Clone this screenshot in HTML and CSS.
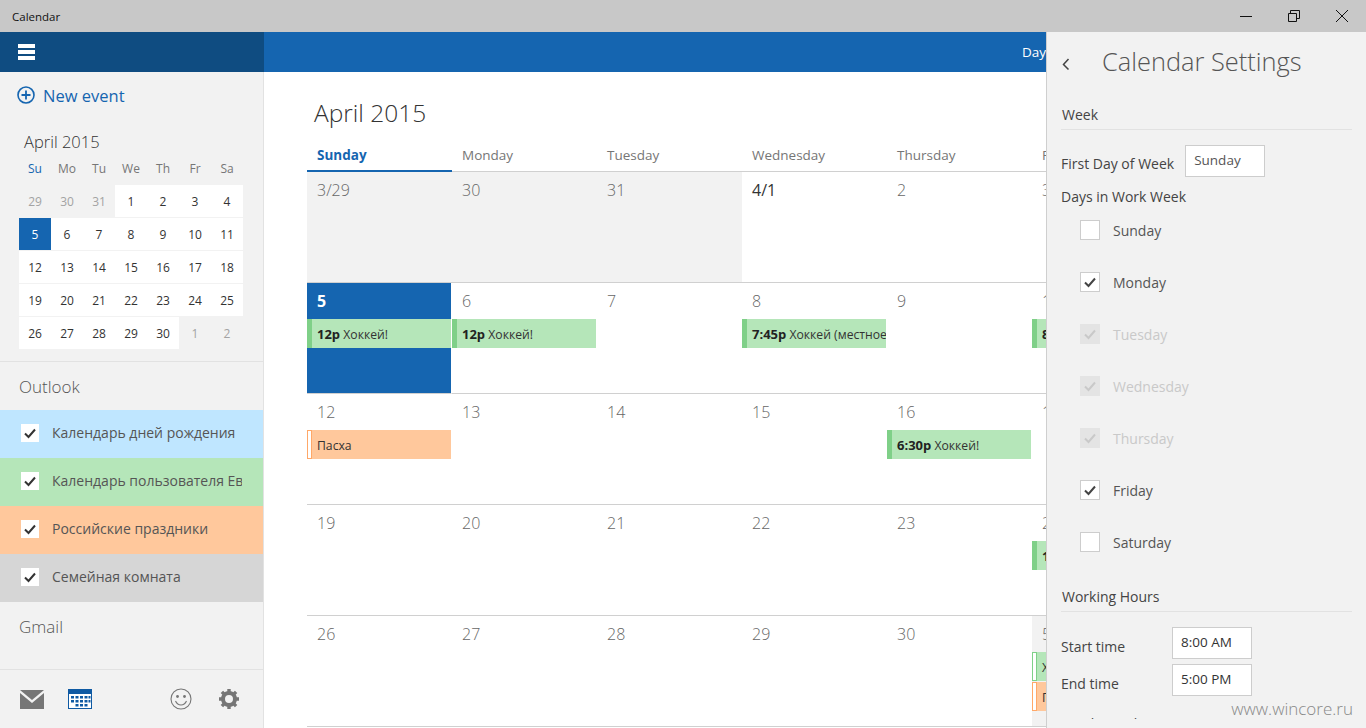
FILE: index.html
```html
<!DOCTYPE html>
<html lang="en">
<head>
<meta charset="utf-8">
<title>Calendar</title>
<link rel="stylesheet" href="styles.css">
</head>
<body>
<div class="window">
  <header class="titlebar">
    <span class="app-name">Calendar</span>
    <div class="win-controls">
      <svg class="win-btn" viewBox="0 0 48 32" width="48" height="32"><path d="M18 16.5h12" stroke="#111" fill="none"/></svg>
      <svg class="win-btn" viewBox="0 0 48 32" width="48" height="32"><path d="M18.500 13.500h8v8h-8zM20.500 13.500v-3h9v8h-3" stroke="#111" fill="none"/></svg>
      <svg class="win-btn" viewBox="0 0 48 32" width="48" height="32"><path d="M18 10l12 12M30 10L18 22" stroke="#111" fill="none"/></svg>
    </div>
  </header>
  <div class="app">
    <aside class="sidebar">
      <div class="side-head">
        <div class="burger"><i></i><i></i><i></i></div>
      </div>
      <div class="new-event">
        <svg viewBox="0 0 18 18" width="18" height="18"><circle cx="9" cy="9" r="8" fill="none" stroke="#1565b0" stroke-width="1.6"/><path d="M9 4.500v9M4.500 9h9" stroke="#1565b0" stroke-width="1.8" fill="none"/></svg>
        <span>New event</span>
      </div>
      <div class="mini">
        <div class="mini-title">April 2015</div>
        <div class="mini-grid">
          <div class="dow cur">Su</div><div class="dow">Mo</div><div class="dow">Tu</div><div class="dow">We</div><div class="dow">Th</div><div class="dow">Fr</div><div class="dow">Sa</div>
          <div class="d off">29</div><div class="d off">30</div><div class="d off">31</div><div class="d">1</div><div class="d">2</div><div class="d">3</div><div class="d">4</div>
          <div class="d sel">5</div><div class="d">6</div><div class="d">7</div><div class="d">8</div><div class="d">9</div><div class="d">10</div><div class="d">11</div>
          <div class="d">12</div><div class="d">13</div><div class="d">14</div><div class="d">15</div><div class="d">16</div><div class="d">17</div><div class="d">18</div>
          <div class="d">19</div><div class="d">20</div><div class="d">21</div><div class="d">22</div><div class="d">23</div><div class="d">24</div><div class="d">25</div>
          <div class="d">26</div><div class="d">27</div><div class="d">28</div><div class="d">29</div><div class="d">30</div><div class="d off">1</div><div class="d off">2</div>
        </div>
      </div>
      <div class="accounts">
        <div class="acc-name">Outlook</div>
        <div class="cal-row blue"><span class="cal-check"><svg viewBox="0 0 18 18" width="18" height="18"><path d="M4 9.500l3.500 3.500L14 5.500" fill="none" stroke="#333" stroke-width="2"/></svg></span><span class="cal-label">Календарь дней рождения</span></div>
        <div class="cal-row green"><span class="cal-check"><svg viewBox="0 0 18 18" width="18" height="18"><path d="M4 9.500l3.500 3.500L14 5.500" fill="none" stroke="#333" stroke-width="2"/></svg></span><span class="cal-label">Календарь пользователя Ев</span></div>
        <div class="cal-row orange"><span class="cal-check"><svg viewBox="0 0 18 18" width="18" height="18"><path d="M4 9.500l3.500 3.500L14 5.500" fill="none" stroke="#333" stroke-width="2"/></svg></span><span class="cal-label">Российские праздники</span></div>
        <div class="cal-row grey"><span class="cal-check"><svg viewBox="0 0 18 18" width="18" height="18"><path d="M4 9.500l3.500 3.500L14 5.500" fill="none" stroke="#333" stroke-width="2"/></svg></span><span class="cal-label">Семейная комната</span></div>
        <div class="acc-name gmail">Gmail</div>
      </div>
      <div class="side-foot">
        <svg viewBox="0 0 24 19" width="24" height="19"><path d="M0 0l12 10L24 0z" fill="#767676"/><path d="M0 3l12 10L24 3v16H0z" fill="#767676"/></svg>
        <svg class="cal-icon" viewBox="0 0 24 20" width="24" height="20"><path d="M0 0h24v20H0z" fill="#0f5aa3"/><path d="M1 5h22v14H1z" fill="#fff"/><path d="M3 7h3v2.500H3zM7.500 7h3v2.500h-3zM12 7h3v2.500h-3zM16.500 7h3v2.500h-3zM3 11h3v2.500H3zM7.500 11h3v2.500h-3zM12 11h3v2.500h-3zM16.500 11h3v2.500h-3zM20.500 7h2v2.500h-2zM20.500 11h2v2.500h-2zM7.500 15h3v2.500h-3zM12 15h3v2.500h-3zM16.500 15h3v2.500h-3z" fill="#0f5aa3"/></svg>
        <svg class="smile" viewBox="0 0 22 22" width="22" height="22"><circle cx="11" cy="11" r="10" fill="none" stroke="#767676" stroke-width="1.100"/><circle cx="7.500" cy="8.500" r="1.400" fill="#767676"/><circle cx="14.500" cy="8.500" r="1.400" fill="#767676"/><path d="M5.500 13c1.300 2.800 3.300 4 5.500 4s4.200-1.200 5.500-4" fill="none" stroke="#767676" stroke-width="1.100"/></svg>
        <svg viewBox="0 0 22 22" width="22" height="22"><circle cx="11" cy="11" r="6" fill="none" stroke="#767676" stroke-width="4"/><path d="M11 1v20M1 11h20M3.900 3.900l14.200 14.200M18.100 3.900L3.900 18.100" stroke="#767676" stroke-width="3.400" stroke-dasharray="3.400 13.600 3.400" fill="none"/></svg>
      </div>
    </aside>
    <main class="main">
      <div class="top-bar"><span>Day</span></div>
      <h1 class="month">April 2015</h1>
      <div class="weekdays">
        <div class="wd active">Sunday</div><div class="wd">Monday</div><div class="wd">Tuesday</div><div class="wd">Wednesday</div><div class="wd">Thursday</div><div class="wd">Friday</div>
      </div>
      <div class="month-grid">
        <div class="cell past"><div class="num">3/29</div></div>
        <div class="cell past"><div class="num">30</div></div>
        <div class="cell past"><div class="num">31</div></div>
        <div class="cell"><div class="num strong">4/1</div></div>
        <div class="cell"><div class="num">2</div></div>
        <div class="cell"><div class="num">3</div></div>

        <div class="cell today"><div class="num">5</div><div class="ev green"><b>12p</b> Хоккей!</div></div>
        <div class="cell"><div class="num">6</div><div class="ev green"><b>12p</b> Хоккей!</div></div>
        <div class="cell"><div class="num">7</div></div>
        <div class="cell"><div class="num">8</div><div class="ev green"><b>7:45p</b> Хоккей (местное</div></div>
        <div class="cell"><div class="num">9</div></div>
        <div class="cell"><div class="num">10</div><div class="ev green"><b>8:00p</b> Хоккей!</div></div>

        <div class="cell"><div class="num">12</div><div class="ev orange free">Пасха</div></div>
        <div class="cell"><div class="num">13</div></div>
        <div class="cell"><div class="num">14</div></div>
        <div class="cell"><div class="num">15</div></div>
        <div class="cell"><div class="num">16</div><div class="ev green"><b>6:30p</b> Хоккей!</div></div>
        <div class="cell"><div class="num">17</div></div>

        <div class="cell"><div class="num">19</div></div>
        <div class="cell"><div class="num">20</div></div>
        <div class="cell"><div class="num">21</div></div>
        <div class="cell"><div class="num">22</div></div>
        <div class="cell"><div class="num">23</div></div>
        <div class="cell"><div class="num">24</div><div class="ev green"><b>1p</b> Хоккей!</div></div>

        <div class="cell"><div class="num">26</div></div>
        <div class="cell"><div class="num">27</div></div>
        <div class="cell"><div class="num">28</div></div>
        <div class="cell"><div class="num">29</div></div>
        <div class="cell"><div class="num">30</div></div>
        <div class="cell past"><div class="num">5/1</div><div class="ev green free">Хоккей!</div><div class="ev orange free">Праздник</div></div>
      </div>
    </main>
    <section class="settings">
      <div class="set-head">
        <svg viewBox="0 0 10 14" width="10" height="14"><path d="M7.500 2L2.500 7.500l5 5" fill="none" stroke="#444" stroke-width="1.500"/></svg>
        <h2>Calendar Settings</h2>
      </div>
      <div class="set-section first">Week</div>
      <div class="field fdow"><span class="fdow-label">First Day of Week</span><span class="box wide">Sunday</span></div>
      <div class="wk-title">Days in Work Week</div>
      <ul class="days">
        <li><span class="cb"></span>Sunday</li>
        <li><span class="cb"><svg viewBox="0 0 18 18" width="18" height="18"><path d="M4 9.500l3.500 3.500L14 5.500" fill="none" stroke="#444" stroke-width="2"/></svg></span>Monday</li>
        <li class="dis"><span class="cb"><svg viewBox="0 0 18 18" width="18" height="18"><path d="M4 9.500l3.500 3.500L14 5.500" fill="none" stroke="#c9c9c9" stroke-width="2"/></svg></span>Tuesday</li>
        <li class="dis"><span class="cb"><svg viewBox="0 0 18 18" width="18" height="18"><path d="M4 9.500l3.500 3.500L14 5.500" fill="none" stroke="#c9c9c9" stroke-width="2"/></svg></span>Wednesday</li>
        <li class="dis"><span class="cb"><svg viewBox="0 0 18 18" width="18" height="18"><path d="M4 9.500l3.500 3.500L14 5.500" fill="none" stroke="#c9c9c9" stroke-width="2"/></svg></span>Thursday</li>
        <li><span class="cb"><svg viewBox="0 0 18 18" width="18" height="18"><path d="M4 9.500l3.500 3.500L14 5.500" fill="none" stroke="#444" stroke-width="2"/></svg></span>Friday</li>
        <li><span class="cb"></span>Saturday</li>
      </ul>
      <div class="set-section hours">Working Hours</div>
      <div class="field ftime"><span>Start time</span><span class="box">8:00 AM</span></div>
      <div class="field ftime tight"><span>End time</span><span class="box">5:00 PM</span></div>
      <div class="set-section cut">Week Numbers</div>
    </section>
    <div class="watermark">www.wincore.ru</div>
  </div>
</div>
</body>
</html>
```

FILE: styles.css
```css
* { box-sizing: border-box; }
html, body { margin: 0; padding: 0; height: 100%; overflow: hidden; }
body { font-family: "Open Sans", "Noto Sans", sans-serif; color: #333; background: #fff; }
.window { width: 1366px; height: 728px; display: flex; flex-direction: column; overflow: hidden; }

.titlebar { height: 32px; flex: none; background: #c8c8c8; display: flex; align-items: center; justify-content: space-between; padding-left: 12px; }
.app-name { font-size: 11.500px; color: #111; }
.win-controls { display: flex; }
.win-btn { display: block; }

.app { flex: 1; min-height: 0; display: flex; position: relative; }

.sidebar { width: 264px; flex: none; background: #f2f2f2; border-right: 1px solid #e2e2e2; display: flex; flex-direction: column; }
.side-head { height: 40px; flex: none; background: #0f4c81; padding: 12px 0 0 18px; margin-right: -1px; }
.burger { width: 17px; display: flex; flex-direction: column; gap: 2px; }
.burger i { display: block; height: 4px; background: #fff; }
.new-event { height: 48px; flex: none; display: flex; align-items: center; gap: 8px; padding: 0 0 2px 17px; color: #1565b0; font-size: 16.500px; }
.mini { padding: 0 0 0 19px; flex: none; height: 242px; border-bottom: 1px solid #e2e2e2; }
.mini-title { font-size: 16.500px; font-weight: 300; height: 26px; line-height: 26px; padding: 0 0 0 5px; margin-top: 9px; color: #333; }
.mini-grid { display: grid; grid-template-columns: repeat(7, 32px); grid-template-rows: 30px repeat(5, 33px); width: 224px; }
.dow { font-size: 12px; color: #767676; text-align: center; line-height: 28px; }
.dow.cur { color: #1565b0; }
.d { background: #fff; font-size: 12px; text-align: center; line-height: 34px; color: #333; height: 32px; }
.d.off { background: transparent; color: #a3a3a3; }
.d.sel { background: #1565b0; color: #fff; }
.accounts { flex: 1; min-height: 0; }
.acc-name { height: 48px; line-height: 50px; font-size: 17px; font-weight: 300; color: #555; padding-left: 19px; }
.cal-row { height: 48px; display: flex; align-items: center; padding: 0 0 3px 21px; gap: 13px; font-size: 14px; color: #555; }
.cal-label { white-space: nowrap; overflow: hidden; width: 190px; }
.cal-row.blue { background: #bfe6ff; }
.cal-row.green { background: #b5e6b9; }
.cal-row.orange { background: #ffc89c; }
.cal-row.grey { background: #d6d6d6; }
.cal-check { width: 18px; height: 18px; background: #fff; display: block; flex: none; }
.cal-check svg { display: block; }
.side-foot { height: 59px; flex: none; border-top: 1px solid #e2e2e2; display: flex; align-items: center; padding: 0 23px 0 20px; }
.cal-icon { margin-left: 24px; }
.smile { margin-left: auto; margin-right: 26px; }

.main { flex: 1; min-width: 0; overflow: hidden; background: #fff; display: flex; flex-direction: column; }
.top-bar { height: 40px; flex: none; background: #1565b0; color: #fff; font-size: 13.500px; line-height: 40px; padding-left: 758px; white-space: nowrap; }
.month { font-size: 24.500px; font-weight: 300; margin: 0; height: 59px; line-height: 81px; padding-left: 50px; color: #333; flex: none; }
.weekdays { display: flex; padding-left: 43px; height: 41px; flex: none; }
.wd { width: 145px; flex: none; font-size: 13.500px; color: #767676; padding: 0 0 0 10px; line-height: 48px; border-bottom: 1px solid #d0d0d0; height: 41px; }
.wd.active { color: #1565b0; font-weight: 700; border-bottom: 2px solid #1565b0; }
.month-grid { display: grid; grid-template-columns: repeat(6, 145px); grid-auto-rows: 111px; margin-left: 43px; flex: none; }
.cell { border-bottom: 1px solid #d0d0d0; padding-top: 1px; overflow: hidden; white-space: nowrap; }
.num { font-size: 16px; font-weight: 300; color: #666; padding-left: 10px; height: 35px; line-height: 34px; }
.num.strong { color: #333; font-weight: 400; }
.cell.past { background: #f2f2f2; }
.cell.today { background: #1565b0; border-right: 1px solid #fff; }
.cell.today .num { color: #fff; font-weight: 700; }
.ev { height: 29px; width: 144px; line-height: 31px; font-size: 12.200px; color: #333; padding-left: 5px; overflow: hidden; border-left: 5px solid; margin-bottom: 1px; white-space: nowrap; }
.ev b { color: #222; font-size: 13px; }
.ev.green { background: #b5e6b9; border-color: #7fd088; }
.ev.orange { background: #ffc89c; border-color: #ffc89c; }
.ev.free { position: relative; border-left: 0; padding-left: 10px; }
.ev.free::before { content: ""; position: absolute; left: 0; top: 0; bottom: 0; width: 5px; background: #fff; }
.ev.orange.free::before { box-shadow: inset 0 0 0 1px #ffa868; }
.ev.green.free::before { box-shadow: inset 0 0 0 1px #7fd088; }

.settings { position: absolute; left: 1046px; top: 0; bottom: 0; width: 320px; background: #f2f2f2; border-left: 1px solid #cfcfcf; padding: 0 14px 0 14px; overflow: hidden; color: #444; }
.set-head { height: 62px; display: flex; align-items: center; gap: 31px; padding: 0 0 4px; }
.set-head svg { margin-top: 6px; flex: none; }
.set-head h2 { font-size: 25.400px; font-weight: 300; margin: 0; color: #555; white-space: nowrap; }
.set-section { font-size: 14px; height: 28px; line-height: 26px; color: #444; border-bottom: 1px solid #e2e2e2; padding-left: 1px; }
.first { margin-top: 8px; }
.field { display: flex; align-items: flex-end; font-size: 14px; }
.fdow { margin-top: 15px; gap: 11px; height: 32px; }
.fdow-label { padding-bottom: 4px; }
.box { display: block; background: #fff; border: 1px solid #cdcdcd; height: 32px; width: 80px; line-height: 28px; padding-left: 8px; font-size: 13.500px; color: #333; }
.box.wide { color: #555; }
.wk-title { font-size: 14px; height: 17px; line-height: 20px; color: #444; margin-top: 10px; }
.days { list-style: none; margin: 0; padding: 0 0 0 19px; }
.days li { height: 52px; display: flex; align-items: center; gap: 13px; font-size: 14px; color: #555; }
.days li.dis { color: #c9c9c9; }
.cb { width: 20px; height: 20px; display: flex; align-items: center; justify-content: center; background: #fff; border: 1px solid #cdcdcd; flex: none; }
.dis .cb { background: #e4e4e4; border-color: #e4e4e4; }
.hours { margin-top: 16px; }
.ftime { height: 32px; margin-top: 5px; }
.ftime > span:first-child { width: 111px; line-height: 20px; padding-bottom: 2px; }
.hours + .ftime { margin-top: 15px; }
.cut { border: 0; margin-top: 15px; height: 8px; overflow: hidden; }

.watermark { position: absolute; right: 13px; bottom: 8px; font-size: 17px; font-weight: 300; color: #888; }
```
